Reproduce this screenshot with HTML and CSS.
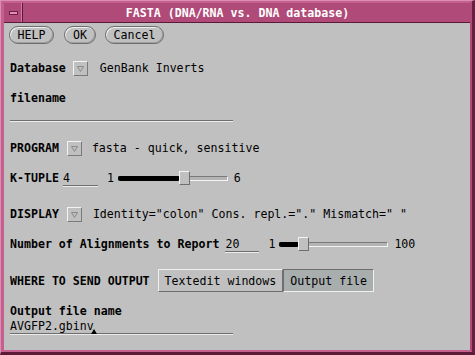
FILE: index.html
```html
<!DOCTYPE html>
<html lang="en">
<head>
  <meta charset="UTF-8" />
  <title>FASTA (DNA/RNA vs. DNA database)</title>
  <link rel="stylesheet" href="styles.css">
</head>
<body>
  <div class="frame">
    <div class="titlebar">
      <div class="winmenu"><span class="winbar"></span></div>
      <div class="title">FASTA (DNA/RNA vs. DNA database)</div>
    </div>

    <div class="panel">
      <div class="row buttons">
        <span class="btn help">HELP</span>
        <span class="btn ok">OK</span>
        <span class="btn cancel">Cancel</span>
      </div>

      <div class="row r-database">
        <span class="label">Database</span>
        <span class="menu m-db"><svg width="15" height="15" viewBox="0 0 15 15"><path d="M4.5 5.5 H10.5 L7.5 10.5 Z" fill="none" stroke="#8a8a8a"/></svg></span>
        <span class="value">GenBank Inverts</span>
      </div>

      <div class="row r-filename"><span class="label">filename</span></div>
      <div class="field wide"></div>

      <div class="row r-program">
        <span class="label">PROGRAM</span>
        <span class="menu m-prog"><svg width="15" height="15" viewBox="0 0 15 15"><path d="M4.5 5.5 H10.5 L7.5 10.5 Z" fill="none" stroke="#8a8a8a"/></svg></span>
        <span class="value">fasta - quick, sensitive</span>
      </div>

      <div class="row r-ktuple">
        <span class="label">K-TUPLE</span>
        <span class="text small k-field">4</span>
        <span class="value lo">1</span>
        <div class="slider s-k">
          <div class="fill" style="width: 62px"></div>
          <div class="knob" style="left: 60px"></div>
        </div>
        <span class="value hi">6</span>
      </div>

      <div class="row r-display">
        <span class="label">DISPLAY</span>
        <span class="menu m-disp"><svg width="15" height="15" viewBox="0 0 15 15"><path d="M4.5 5.5 H10.5 L7.5 10.5 Z" fill="none" stroke="#8a8a8a"/></svg></span>
        <span class="value">Identity="colon" Cons. repl.="." Mismatch=" "</span>
      </div>

      <div class="row r-number">
        <span class="label">Number of Alignments to Report</span>
        <span class="text small n-field">20</span>
        <span class="value lo">1</span>
        <div class="slider s-n">
          <div class="fill" style="width: 20px"></div>
          <div class="knob" style="left: 18px"></div>
        </div>
        <span class="value hi">100</span>
      </div>

      <div class="row r-where">
        <span class="label">WHERE TO SEND OUTPUT</span>
        <div class="choice">
          <span class="opt">Textedit windows</span>
          <span class="opt selected">Output file</span>
        </div>
      </div>

      <div class="row r-outname"><span class="label">Output file name</span></div>
      <div class="field wide out">
        <span class="value">AVGFP2.gbinv</span>
        <span class="caret"></span>
      </div>
    </div>
  </div>
</body>
</html>
```

FILE: styles.css
```css
* {
  margin: 0;
  padding: 0;
  box-sizing: border-box;
}

body {
  width: 475px;
  height: 355px;
  overflow: hidden;
  font-family: "DejaVu Sans Mono", "Liberation Mono", monospace;
  font-size: 11.6px;
  color: #000;
  background-color: #c0c0c0;
}

.frame {
  width: 475px;
  height: 355px;
  display: flex;
  flex-direction: column;
  background-color: #c0c0c0;
  border-top: 3px solid #c4608e;
  border-left: 4px solid #c4608e;
  border-right: 5px solid #b04a78;
  border-bottom: 5px solid #c4608e;
  position: relative;
}

.frame::before {
  content: "";
  position: absolute;
  top: -3px;
  left: -4px;
  right: -5px;
  bottom: -5px;
  border-top: 1px solid #dc8db2;
  border-left: 1px solid #dc8db2;
  border-right: 3px solid #6a1e42;
  border-bottom: 3px solid #5a1a38;
  pointer-events: none;
}

.titlebar {
  height: 20px;
  display: flex;
  align-items: center;
  background-color: #b04a78;
  border-bottom: 1px solid #5a1a38;
}

.winmenu {
  width: 18px;
  height: 19px;
  display: flex;
  align-items: center;
  justify-content: center;
  border-right: 1px solid #5a1a38;
  box-shadow: inset -1px 0 #d07aa2;
  margin-left: 1px;
}

.winbar {
  width: 9px;
  height: 4px;
  background-color: #e090b8;
  border: 1px solid #6a1e42;
}

.title {
  flex: 1;
  text-align: center;
  color: #fff;
  font-weight: bold;
  padding-right: 18px;
}

.panel {
  flex: 1;
  padding-left: 6px;
  display: flex;
  flex-direction: column;
}

.row {
  display: flex;
  align-items: center;
  height: 16px;
  white-space: nowrap;
}

.label {
  font-weight: bold;
}

/* oval buttons */
.buttons {
  height: 18px;
  margin-top: 3px;
}

.btn {
  height: 18px;
  display: flex;
  align-items: center;
  justify-content: center;
  border: 1px solid #6e6e6e;
  border-radius: 9px;
  box-shadow: inset 1px 1px #f0f0f0, inset -1px -1px #a0a0a0;
}

.help { width: 45px; margin-left: -1px; }
.ok { width: 32px; margin-left: 10px; }
.cancel { width: 59px; margin-left: 9px; }

/* abbreviated menu buttons */
.menu {
  width: 15px;
  height: 15px;
  display: flex;
  border-top: 1px solid #f4f4f4;
  border-left: 1px solid #f4f4f4;
  border-right: 1px solid #7a7a7a;
  border-bottom: 1px solid #7a7a7a;
}

.menu svg {
  margin: -1px;
}

.r-database { margin-top: 16px; }
.m-db { margin-left: 7px; margin-right: 12px; }

.r-filename { margin-top: 14px; }

.field {
  border-bottom: 1px solid #6e6e6e;
  box-shadow: 0 1px #ececec;
}

.wide {
  width: 223px;
  height: 15px;
}

.r-program { margin-top: 19px; }
.m-prog { margin-left: 8px; margin-right: 10px; }

.r-ktuple { margin-top: 14px; }

.text {
  height: 16px;
  display: flex;
  align-items: center;
  border-bottom: 1px solid #6e6e6e;
  box-shadow: 0 1px #ececec;
}

.k-field { width: 35px; margin-left: 4px; }
.n-field { width: 34px; margin-left: 6px; }

.lo { margin-left: 9px; margin-right: 4px; }
.hi { margin-left: 6px; }

.slider {
  position: relative;
  height: 5px;
  background-color: #b4b4b4;
  border-top: 1px solid #7a7a7a;
  border-left: 1px solid #7a7a7a;
  border-right: 1px solid #f4f4f4;
  border-bottom: 1px solid #f4f4f4;
  margin-top: 1px;
}

.s-k { width: 110px; }
.s-n { width: 109px; }

.fill {
  position: absolute;
  top: -1px;
  left: -1px;
  height: 5px;
  background-color: #000;
  border-radius: 2px;
}

.knob {
  position: absolute;
  top: -6px;
  width: 11px;
  height: 14px;
  background-color: #c0c0c0;
  border-top: 1px solid #f4f4f4;
  border-left: 1px solid #f4f4f4;
  border-right: 1px solid #6e6e6e;
  border-bottom: 1px solid #6e6e6e;
}

.r-display { margin-top: 20px; }
.m-disp { margin-left: 8px; margin-right: 11px; }

.r-number { margin-top: 14px; }

/* exclusive choice */
.r-where {
  height: 23px;
  margin-top: 17px;
}

.choice {
  display: flex;
  margin-left: 8px;
}

.opt {
  height: 23px;
  display: flex;
  align-items: center;
  padding: 0 6px;
  border-top: 1px solid #f0f0f0;
  border-left: 1px solid #f0f0f0;
  border-right: 1px solid #6e6e6e;
  border-bottom: 1px solid #6e6e6e;
}

.opt.selected {
  background-color: #a8adad;
  border-top: 1px solid #6e6e6e;
  border-left: 1px solid #6e6e6e;
  border-right: 1px solid #f0f0f0;
  border-bottom: 1px solid #f0f0f0;
}

.r-outname { margin-top: 11px; }

.out {
  position: relative;
  display: flex;
  align-items: center;
  height: 15px;
}

.caret {
  position: absolute;
  left: 81px;
  bottom: -1px;
  width: 0;
  height: 0;
  border-left: 3px solid transparent;
  border-right: 3px solid transparent;
  border-bottom: 5px solid #000;
}
```
